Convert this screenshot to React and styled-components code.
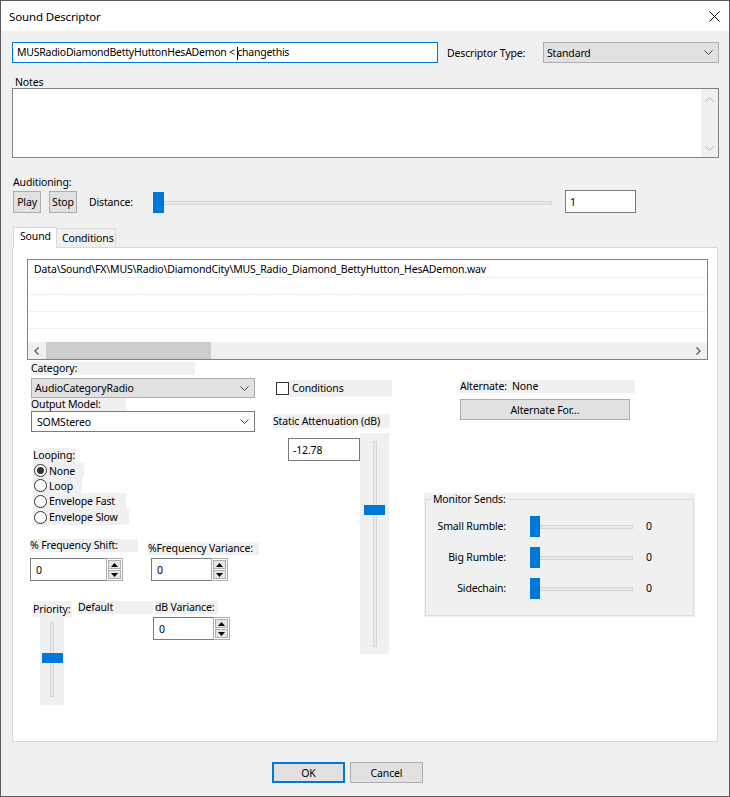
import React from 'react';
import styled, { createGlobalStyle } from 'styled-components';

const GlobalStyle = createGlobalStyle`
  html, body { margin: 0; padding: 0; background: #f0f0f0; }
  body { font-family: "Noto Sans", "Open Sans", sans-serif; font-size: 10.5px; color: #000; letter-spacing: -0.15px; }
  * { box-sizing: border-box; }
`;

const Window = styled.div`
  width: 730px; height: 797px; border: 1px solid #5b5b5b;
  display: flex; flex-direction: column; background: #f0f0f0; overflow: hidden;
`;
const TitleBar = styled.div`
  height: 30px; flex-shrink: 0; background: #fff; display: flex; align-items: center;
  padding: 0 9px 0 8px; font-size: 11.5px;
`;
const Title = styled.span` flex: 1; `;
const Body = styled.div`
  flex: 1; display: flex; flex-direction: column; padding: 11px 10px 0 11px;
`;
const Row = styled.div`
  display: flex; align-items: ${p => p.$align || 'center'};
  margin-top: ${p => p.$mt || 0}px; height: ${p => p.$h ? p.$h + 'px' : 'auto'};
`;
const TextBox = styled.div`
  width: ${p => p.$w}px; height: ${p => p.$h || 21}px; flex-shrink: 0;
  border: 1px solid ${p => p.$focus ? '#0078d7' : '#7a7a7a'}; background: #fff;
  display: flex; align-items: center; padding-left: ${p => p.$pl ?? 4}px;
  margin-left: ${p => p.$ml || 0}px; margin-top: ${p => p.$mt || 0}px; white-space: pre;
  letter-spacing: ${p => p.$tight ? '-0.25px' : 'inherit'};
`;
const Caret = styled.span`
  display: inline-block; width: 0; height: 13px; border-left: 1px solid #000;
  vertical-align: middle; margin: 0 -1px 0 0;
`;
const Label = styled.div`
  line-height: ${p => p.$h || 12}px; height: ${p => p.$h || 12}px; white-space: nowrap;
  margin-left: ${p => p.$ml || 0}px; margin-top: ${p => p.$mt || 0}px;
  width: ${p => p.$w ? p.$w + 'px' : 'auto'}; flex-shrink: 0;
  background: ${p => p.$bg ? '#f0f0f0' : 'transparent'};
  padding-left: ${p => p.$pl || 0}px;
  text-align: ${p => p.$right ? 'right' : 'left'};
`;
const Select = styled.div`
  width: ${p => p.$w}px; height: ${p => p.$h || 21}px; flex-shrink: 0;
  margin-left: ${p => p.$auto ? 'auto' : (p.$ml || 0) + 'px'}; margin-top: ${p => p.$mt || 0}px;
  background: ${p => p.$white ? '#fff' : '#e1e1e1'};
  border: 1px solid ${p => p.$white ? '#7a7a7a' : '#adadad'};
  display: flex; align-items: center; justify-content: space-between;
  padding: 0 5px 0 ${p => p.$pl || 3}px;
`;
const Button = styled.div`
  width: ${p => p.$w}px; height: ${p => p.$h || 21}px; flex-shrink: 0;
  background: #e1e1e1; border: ${p => p.$def ? '2px solid #0078d7' : '1px solid #adadad'};
  display: flex; align-items: center; justify-content: center;
  margin-left: ${p => p.$ml || 0}px; margin-top: ${p => p.$mt || 0}px;
`;
const NotesBox = styled.div`
  height: 70px; border: 1px solid #828282; background: #fff;
  display: flex; justify-content: flex-end;
`;
const VScroll = styled.div`
  width: 17px; background: #f0f0f0; display: flex; flex-direction: column;
  justify-content: space-between; align-items: center; padding: 8px 0 6px;
`;
const HTrackWrap = styled.div`
  width: ${p => p.$w}px; height: 21px; display: flex; align-items: center; flex-shrink: 0;
  margin-left: ${p => p.$ml || 0}px;
`;
const HThumb = styled.div`
  width: ${p => p.$tw || 11}px; height: 21px; background: #0078d7; flex-shrink: 0;
`;
const HTrack = styled.div`
  flex: 1; height: 4px; background: #e7eaea; border: 1px solid #d6d6d6;
`;
const TabStrip = styled.div`
  display: flex; align-items: flex-end; height: 20px; margin-top: 14px; margin-left: 1px;
  position: relative; z-index: 1;
`;
const Tab = styled.div`
  height: ${p => p.$active ? 21 : 19}px; width: ${p => p.$w}px;
  margin-bottom: ${p => p.$active ? -1 : 0}px;
  background: ${p => p.$active ? '#fff' : '#f0f0f0'};
  border: 1px solid #d9d9d9; border-bottom: none;
  ${p => !p.$active && 'border-left: none;'}
  padding-left: ${p => p.$pl}px; line-height: ${p => p.$active ? 17 : 19}px;
`;
const Panel = styled.div`
  height: 495px; width: 706px; background: #fff; border: 1px solid #d9d9d9;
  display: flex; flex-direction: column;
`;
const ListBox = styled.div`
  margin: 11px 0 0 14px; width: 681px; height: 101px; border: 1px solid #828282;
  display: flex; flex-direction: column; background: #fff;
`;
const ListRows = styled.div` flex: 1; overflow: hidden; padding: 1px 1px 0; `;
const ListRow = styled.div`
  height: 17px; border-bottom: 1px solid #efefef; padding-left: 5px; line-height: 17px; white-space: nowrap;
`;
const HScroll = styled.div`
  height: 17px; background: #f0f0f0; display: flex; align-items: center;
`;
const ScrollBtn = styled.div`
  width: 17px; height: 17px; display: flex; align-items: center; justify-content: center; flex-shrink: 0;
`;
const ScrollThumb = styled.div`
  width: 165px; height: 17px; background: #cdcdcd; margin-left: 1px;
`;
const ScrollSpace = styled.div` flex: 1; `;
const Columns = styled.div` display: flex; margin-left: 18px; `;
const Col = styled.div`
  display: flex; flex-direction: column; width: ${p => p.$w}px; flex-shrink: 0;
  margin-left: ${p => p.$ml || 0}px;
`;
const RadioRow = styled.div`
  display: flex; align-items: center; height: ${p => p.$h}px; width: ${p => p.$w}px;
  background: #f0f0f0; margin-left: 2px; padding-left: 1px; gap: 2px;
`;
const RadioCircle = styled.div`
  width: 13px; height: 13px; border-radius: 50%; border: 1px solid #333; background: #fff;
  display: flex; align-items: center; justify-content: center; flex-shrink: 0;
  &::after { content: ''; width: 7px; height: 7px; border-radius: 50%; background: ${p => p.$on ? '#333' : 'transparent'}; }
`;
const CheckRow = styled.div` display: flex; align-items: center; height: 17px; margin-top: 20px; margin-left: 3px; `;
const CheckBox = styled.div` width: 13px; height: 13px; border: 1px solid #333; background: #fff; flex-shrink: 0; `;
const SpinField = styled.div`
  display: flex; height: 23px; width: ${p => p.$w}px; margin-left: ${p => p.$ml || 0}px;
  margin-top: ${p => p.$mt || 0}px; flex-shrink: 0;
`;
const SpinText = styled.div`
  flex: 1; border: 1px solid #7a7a7a; border-right: none; background: #fff;
  display: flex; align-items: center; padding-left: 5px;
`;
const SpinBtns = styled.div`
  width: 17px; border: 1px solid #adadad; background: #fff; display: flex; flex-direction: column;
  padding: 1px; gap: 1px;
`;
const SpinBtn = styled.div`
  flex: 1; background: #e5e5e5; border: 1px solid #adadad; display: flex; align-items: center; justify-content: center;
`;
const VSlider = styled.div`
  width: ${p => p.$w}px; height: ${p => p.$h}px; background: #f0f0f0; flex-shrink: 0;
  margin-left: ${p => p.$ml || 0}px; display: flex; flex-direction: column; align-items: center;
  padding-top: ${p => p.$pt}px;
`;
const VTrack = styled.div`
  width: 4px; height: ${p => p.$h}px; background: #e7eaea; border: 1px solid #d6d6d6;
  display: flex; flex-direction: column; align-items: center; padding-top: ${p => p.$thumb}px;
`;
const VThumb = styled.div` width: 21px; height: 10px; background: #0078d7; flex-shrink: 0; `;
const Group = styled.div`
  width: 271px; height: 124px; background: #f0f0f0; margin-top: 73px; padding: 0 1px 1px;
`;
const Fieldset = styled.fieldset`
  margin: 0; height: 123px; border: 1px solid #dcdcdc; padding: 11px 0 0 5px;
  display: flex; flex-direction: column; gap: 10px; min-width: 0;
`;
const Legend = styled.legend` padding: 0 2px; line-height: 12px; font-size: 10.5px; `;
const SendRow = styled.div` display: flex; align-items: center; height: 21px; `;
const Footer = styled.div` display: flex; gap: 5px; margin-top: 20px; margin-left: 260px; `;

const Chevron = ({ dir = 'down', color = '#444' }) => {
  const pts = {
    down: '0.5,0.5 4.5,4.5 8.5,0.5',
    up: '0.5,4.5 4.5,0.5 8.5,4.5',
  }[dir];
  return (
    <svg width="9" height="5" viewBox="0 0 9 5"><polyline points={pts} fill="none" stroke={color} strokeWidth="1" /></svg>
  );
};
const SideChevron = ({ dir }) => (
  <svg width="5" height="8" viewBox="0 0 5 8">
    <polyline points={dir === 'left' ? '4.5,0.5 1,4 4.5,7.5' : '0.5,0.5 4,4 0.5,7.5'} fill="none" stroke="#606060" strokeWidth="1.4" />
  </svg>
);
const Tri = ({ up }) => (
  <svg width="7" height="4" viewBox="0 0 7 4"><polygon points={up ? '0,4 7,4 3.5,0' : '0,0 7,0 3.5,4'} fill="#000" /></svg>
);
const Spinner = ({ w, ml, mt, value }) => (
  <SpinField $w={w} $ml={ml} $mt={mt}>
    <SpinText>{value}</SpinText>
    <SpinBtns><SpinBtn><Tri up /></SpinBtn><SpinBtn><Tri /></SpinBtn></SpinBtns>
  </SpinField>
);
const Radio = ({ on, label, w, h }) => (
  <RadioRow $w={w} $h={h}><RadioCircle $on={on} /><span>{label}</span></RadioRow>
);
const Send = ({ label }) => (
  <SendRow>
    <Label $w={75} $right $h={21}>{label}</Label>
    <HTrackWrap $w={103} $ml={24}><HThumb $tw={10} /><HTrack /></HTrackWrap>
    <Label $ml={13} $h={21}>0</Label>
  </SendRow>
);

export default function App() {
  return (
    <>
      <GlobalStyle />
      <Window>
        <TitleBar>
          <Title>Sound Descriptor</Title>
          <svg width="11" height="11" viewBox="0 0 11 11"><path d="M0.5 0.5 L10.5 10.5 M10.5 0.5 L0.5 10.5" stroke="#000" strokeWidth="1" /></svg>
        </TitleBar>
        <Body>
          <Row $h={21}>
            <TextBox $w={426} $focus $tight $pl={4}><span>MUSRadioDiamondBettyHuttonHesADemon &lt; <Caret />changethis</span></TextBox>
            <Label $ml={9}>Descriptor Type:</Label>
            <Select $w={176} $auto $pl={3}><span>Standard</span><Chevron /></Select>
          </Row>
          <Label $mt={13} $ml={3}>Notes</Label>
          <NotesBox>
            <VScroll><Chevron dir="up" color="#b5b5b5" /><Chevron color="#b5b5b5" /></VScroll>
          </NotesBox>
          <Label $mt={18} $ml={1}>Auditioning:</Label>
          <Row $mt={2} $h={23} $align="flex-end">
            <Button $w={28} $h={22} $ml={1}>Play</Button>
            <Button $w={28} $h={22} $ml={8}>Stop</Button>
            <Label $ml={12} $w={64} $h={21}>Distance:</Label>
            <HTrackWrap $w={399}><HThumb /><HTrack /></HTrackWrap>
            <TextBox $w={71} $h={23} $ml={13}>1</TextBox>
          </Row>
          <TabStrip>
            <Tab $active $w={44} $pl={6}>Sound</Tab>
            <Tab $w={59} $pl={5}>Conditions</Tab>
          </TabStrip>
          <Panel>
            <ListBox>
              <ListRows>
                <ListRow>Data\Sound\FX\MUS\Radio\DiamondCity\MUS_Radio_Diamond_BettyHutton_HesADemon.wav</ListRow>
                <ListRow />
                <ListRow />
                <ListRow />
                <ListRow />
              </ListRows>
              <HScroll>
                <ScrollBtn><SideChevron dir="left" /></ScrollBtn>
                <ScrollThumb />
                <ScrollSpace />
                <ScrollBtn><SideChevron dir="right" /></ScrollBtn>
              </HScroll>
            </ListBox>
            <Columns>
              <Col $w={228}>
                <Label $mt={2} $w={164} $h={13} $bg>Category:</Label>
                <Select $w={224} $h={20} $mt={3} $pl={3}><span>AudioCategoryRadio</span><Chevron /></Select>
                <Label $w={95} $h={13} $bg>Output Model:</Label>
                <Select $w={224} $h={21} $white $pl={5}><span>SOMStereo</span><Chevron /></Select>
                <Label $mt={16} $ml={2} $w={43} $h={15} $bg>Looping:</Label>
                <Radio on label="None" w={51} h={15} />
                <Radio label="Loop" w={49} h={15} />
                <Radio label="Envelope Fast" w={93} h={16} />
                <Radio label="Envelope Slow" w={96} h={16} />
                <Row $align="flex-start">
                  <Col $w={118} $ml={-1}>
                    <Label $mt={14} $w={108} $h={13} $bg>% Frequency Shift:</Label>
                    <Spinner w={93} mt={6} value="0" />
                  </Col>
                  <Col $w={111}>
                    <Label $mt={17} $w={111} $h={13} $bg>%Frequency Variance:</Label>
                    <Spinner w={77} ml={3} mt={3} value="0" />
                  </Col>
                </Row>
                <Row $align="flex-start" $mt={20}>
                  <Col $w={122} $ml={2}>
                    <Row $align="flex-start">
                      <Label $w={39} $h={16} $bg>Priority:</Label>
                      <Label $ml={6} $w={75} $h={13} $bg>Default</Label>
                    </Row>
                    <VSlider $w={24} $h={88} $ml={7} $pt={5}>
                      <VTrack $h={75} $thumb={30}><VThumb /></VTrack>
                    </VSlider>
                  </Col>
                  <Col $w={80}>
                    <Label $w={63} $h={13} $bg>dB Variance:</Label>
                    <Spinner w={77} ml={-2} mt={3} value="0" />
                  </Col>
                </Row>
              </Col>
              <Col $w={119} $ml={14}>
                <CheckRow>
                  <CheckBox />
                  <Label $w={103} $h={17} $bg $pl={3}>Conditions</Label>
                </CheckRow>
                <Label $mt={17} $w={117} $h={14} $bg>Static Attenuation (dB)</Label>
                <Row $align="flex-start" $mt={5}>
                  <TextBox $w={72} $h={23} $ml={15} $mt={5}>-12.78</TextBox>
                  <VSlider $w={29} $h={221} $pt={8}>
                    <VTrack $h={206} $thumb={63}><VThumb /></VTrack>
                  </VSlider>
                </Row>
              </Col>
              <Col $w={271} $ml={32}>
                <Label $mt={20} $ml={36} $w={175} $h={13} $bg>Alternate:&nbsp;&nbsp;None</Label>
                <Button $w={170} $h={21} $ml={36} $mt={6}>Alternate For…</Button>
                <Group>
                  <Fieldset>
                    <Legend>Monitor Sends:</Legend>
                    <Send label="Small Rumble:" />
                    <Send label="Big Rumble:" />
                    <Send label="Sidechain:" />
                  </Fieldset>
                </Group>
              </Col>
            </Columns>
          </Panel>
          <Footer>
            <Button $w={73} $h={21} $def>OK</Button>
            <Button $w={73} $h={21}>Cancel</Button>
          </Footer>
        </Body>
      </Window>
    </>
  );
}
